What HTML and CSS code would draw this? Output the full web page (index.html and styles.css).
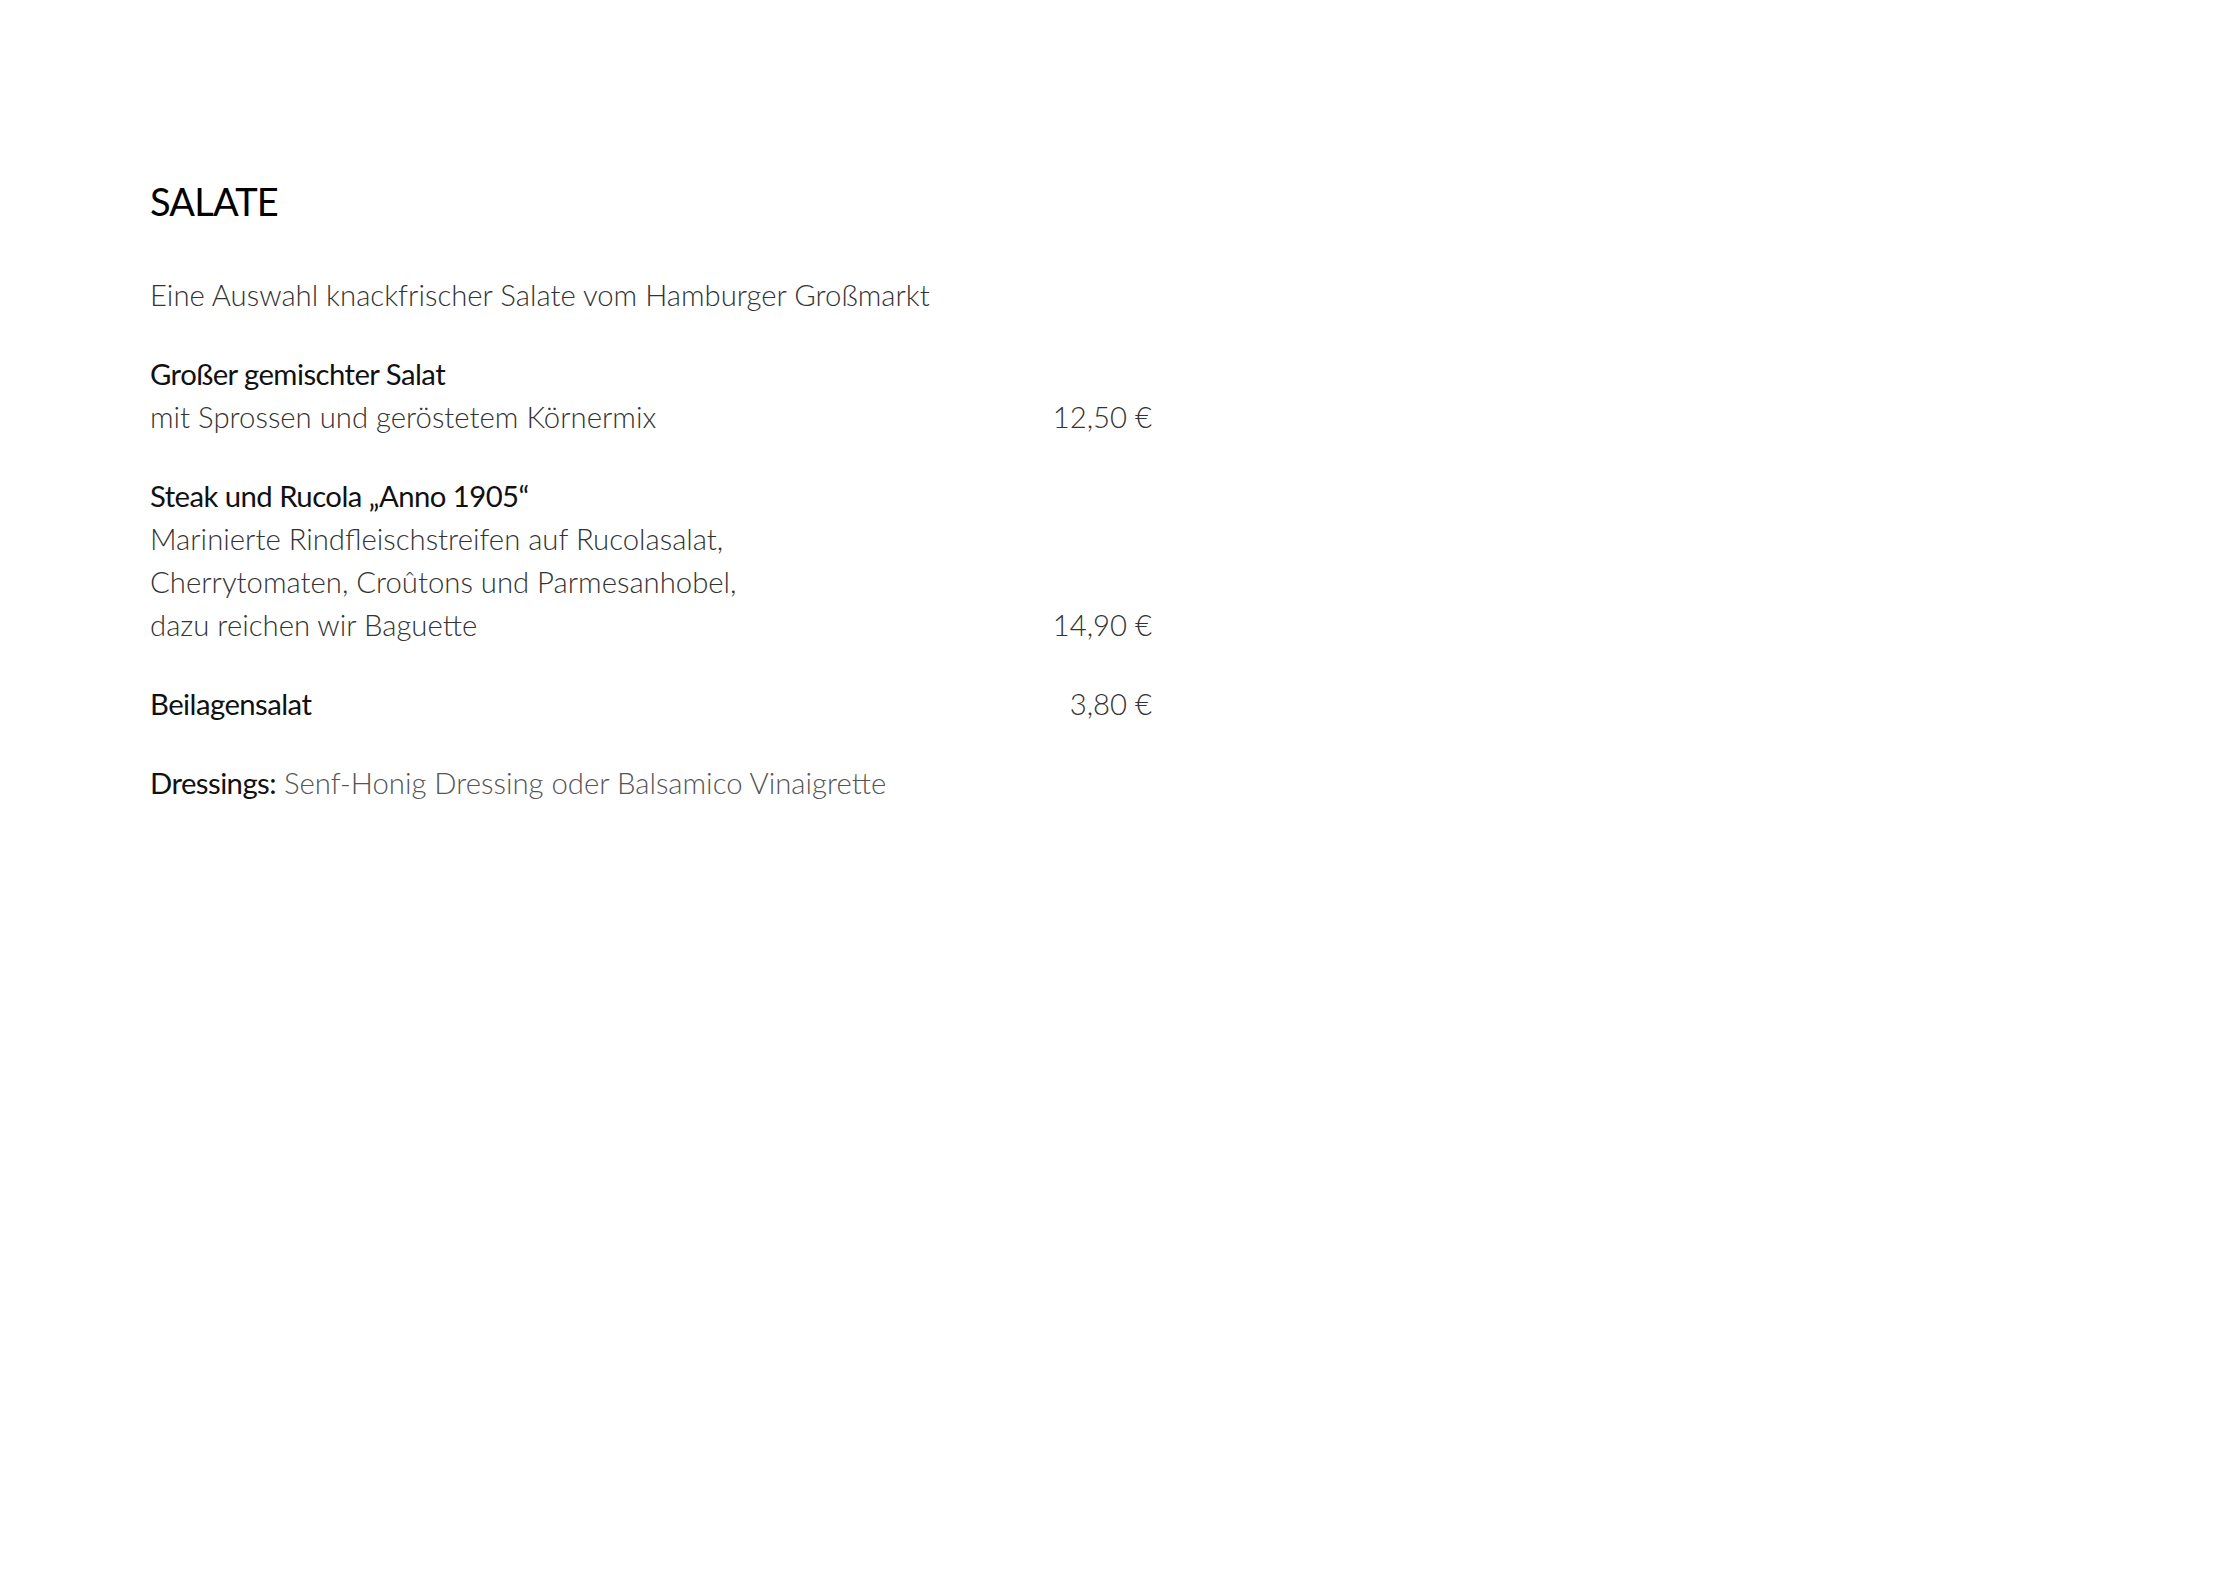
FILE: index.html
```html
<!DOCTYPE html>
<html lang="de">
<head>
  <meta charset="UTF-8" />
  <title>Speisekarte – Salate</title>
  <link rel="stylesheet" href="styles.css">
</head>
<body>

  <div class="page">
    <h1 class="section-title">SALATE</h1>

    <p class="intro">Eine Auswahl knackfrischer Salate vom Hamburger Großmarkt</p>

    <div class="dish">
      <div class="dish-name">Großer gemischter Salat</div>
      <div class="dish-row">
        <span class="dish-desc">mit Sprossen und geröstetem Körnermix</span>
        <span class="price">12,50 €</span>
      </div>
    </div>

    <div class="dish">
      <div class="dish-name">Steak und Rucola „Anno 1905“</div>
      <div class="dish-desc">Marinierte Rindfleischstreifen auf Rucolasalat,</div>
      <div class="dish-desc">Cherrytomaten, Croûtons und Parmesanhobel,</div>
      <div class="dish-row">
        <span class="dish-desc">dazu reichen wir Baguette</span>
        <span class="price">14,90 €</span>
      </div>
    </div>

    <div class="dish">
      <div class="dish-row">
        <span class="dish-name">Beilagensalat</span>
        <span class="price">3,80 €</span>
      </div>
    </div>

    <p class="dressings"><span class="dish-name">Dressings:</span> Senf-Honig Dressing oder Balsamico Vinaigrette</p>
  </div>

</body>
</html>
```

FILE: styles.css
```css
body {
  font-family: Lato, "Open Sans", sans-serif;
  margin: 0;
  padding: 0;
  background-color: #ffffff;
  color: #222;
}

.page {
  width: 1002px;
  padding: 176px 0 0 150px;
}

.section-title {
  margin: 0 0 47px 0;
  font-size: 38px;
  font-weight: 400;
  line-height: 50px;
  color: #000;
  letter-spacing: -0.8px;
}

.intro {
  margin: 0 0 36px 0;
  font-size: 29.3px;
  font-weight: 300;
  line-height: 43px;
  color: #333;
}

.dish {
  margin-bottom: 36px;
  font-size: 29.3px;
  line-height: 43px;
}

.dish-name {
  font-weight: 400;
  color: #111;
  letter-spacing: -0.55px;
}

.dish-desc {
  font-weight: 300;
  color: #333;
}

.dish-row {
  display: flex;
  justify-content: space-between;
}

.price {
  font-weight: 300;
  color: #333;
}

.dressings {
  margin: 0;
  font-size: 29.3px;
  font-weight: 300;
  line-height: 43px;
  color: #555;
}
```
